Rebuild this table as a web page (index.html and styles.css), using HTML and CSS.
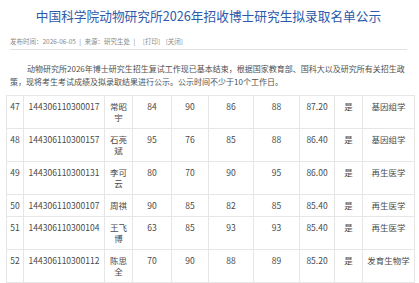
FILE: index.html
```html
<!DOCTYPE html>
<html lang="zh-CN">
<head>
<meta charset="utf-8">
<title>中国科学院动物研究所2026年招收博士研究生拟录取名单公示</title>
<link rel="stylesheet" href="styles.css">
</head>
<body>
<div class="page">
  <header class="head">
    <h1 class="title">中国科学院动物研究所2026年招收博士研究生拟录取名单公示</h1>
    <div class="meta">发布时间：2026-06-05 <span class="sep">|</span> 来源：研究生处 <span class="sep">|</span> <a class="act">[打印]</a> <a class="act">[关闭]</a></div>
  </header>
  <p class="intro">动物研究所2026年博士研究生招生复试工作现已基本结束，根据国家教育部、国科大以及研究所有关招生政策，现将考生考试成绩及拟录取结果进行公示。公示时间不少于10个工作日。</p>
  <table class="list">
    <colgroup>
      <col class="c-no"><col class="c-id"><col class="c-name"><col class="c-s1"><col class="c-s2"><col class="c-s3"><col class="c-s4"><col class="c-tot"><col class="c-yes"><col class="c-maj">
    </colgroup>
    <tbody>
      <tr><td>47</td><td>144306110300017</td><td>常昭宇</td><td>84</td><td>90</td><td>86</td><td>88</td><td>87.20</td><td>是</td><td>基因组学</td></tr>
      <tr><td>48</td><td>144306110300157</td><td>石亮斌</td><td>95</td><td>76</td><td>85</td><td>88</td><td>86.40</td><td>是</td><td>基因组学</td></tr>
      <tr><td>49</td><td>144306110300131</td><td>李可云</td><td>80</td><td>70</td><td>90</td><td>95</td><td>86.00</td><td>是</td><td>再生医学</td></tr>
      <tr><td>50</td><td>144306110300107</td><td>周祺</td><td>90</td><td>85</td><td>82</td><td>85</td><td>85.40</td><td>是</td><td>再生医学</td></tr>
      <tr><td>51</td><td>144306110300104</td><td>王飞博</td><td>63</td><td>85</td><td>93</td><td>93</td><td>85.40</td><td>是</td><td>再生医学</td></tr>
      <tr><td>52</td><td>144306110300112</td><td>陈思全</td><td>70</td><td>90</td><td>88</td><td>89</td><td>85.20</td><td>是</td><td>发育生物学</td></tr>
    </tbody>
  </table>
</div>
</body>
</html>
```

FILE: styles.css
```css
html, body {
  margin: 0;
  padding: 0;
  background: #ffffff;
}
body {
  font-family: "Noto Sans CJK SC", "Noto Sans", sans-serif;
  color: #4a4a4a;
  overflow: hidden;
}
.page {
  padding: 6px 12px 0 10px;
}
.head {
  border-bottom: 1px solid #e2e2e2;
  padding-bottom: 3px;
}
.title {
  margin: 0;
  font-size: 12.7px;
  line-height: 20px;
  font-weight: normal;
  color: #2d5aaa;
  text-align: center;
  white-space: nowrap;
}
.meta {
  margin-top: 10px;
  font-size: 6.5px;
  line-height: 10px;
  color: #8a8a8a;
  white-space: nowrap;
}
.meta .sep {
  margin: 0 2px;
}
.meta .act {
  margin-left: 4px;
}
.intro {
  margin: 12px 0 0 0;
  font-size: 8px;
  line-height: 13px;
  text-indent: 17px;
  color: #4f4f4f;
}
.list {
  margin: 7px 0 0 -4px;
  width: 408px;
  table-layout: fixed;
  border-collapse: collapse;
  font-size: 8.5px;
  line-height: 11px;
  color: #4a4a4a;
}
.list td {
  border: 1px solid #e6e6e6;
  padding: 5px 2px;
  text-align: center;
  vertical-align: top;
  word-break: break-all;
}
.c-no { width: 17px; }
.c-id { width: 81px; }
.c-name { width: 28px; }
.c-s1 { width: 39px; }
.c-s2 { width: 37px; }
.c-s3 { width: 45px; }
.c-s4 { width: 46px; }
.c-tot { width: 35px; }
.c-yes { width: 28px; }
.c-maj { width: 52px; }
```
